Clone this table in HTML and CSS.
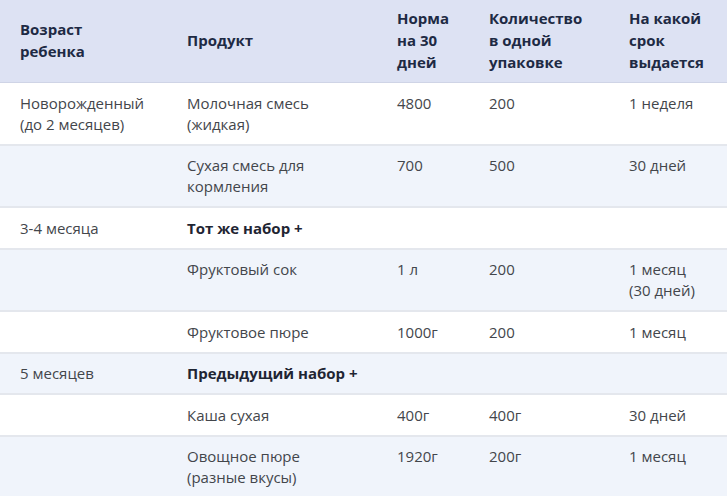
FILE: index.html
```html
<!DOCTYPE html>
<html lang="ru">
<head>
<meta charset="utf-8">
<link rel="stylesheet" href="styles.css">
</head>
<body>
<table class="norms">
  <colgroup>
    <col class="c1"><col class="c2"><col class="c3"><col class="c4"><col class="c5">
  </colgroup>
  <thead>
    <tr>
      <th>Возраст<br>ребенка</th>
      <th>Продукт</th>
      <th>Норма<br>на 30<br>дней</th>
      <th>Количество<br>в одной<br>упаковке</th>
      <th>На какой<br>срок<br>выдается</th>
    </tr>
  </thead>
  <tbody>
    <tr>
      <td>Новорожденный<br>(до 2 месяцев)</td>
      <td>Молочная смесь<br>(жидкая)</td>
      <td>4800</td>
      <td>200</td>
      <td>1 неделя</td>
    </tr>
    <tr class="alt">
      <td></td>
      <td>Сухая смесь для<br>кормления</td>
      <td>700</td>
      <td>500</td>
      <td>30 дней</td>
    </tr>
    <tr>
      <td>3-4 месяца</td>
      <td class="strong">Тот же набор +</td>
      <td></td>
      <td></td>
      <td></td>
    </tr>
    <tr class="alt">
      <td></td>
      <td>Фруктовый сок</td>
      <td>1 л</td>
      <td>200</td>
      <td>1 месяц<br>(30 дней)</td>
    </tr>
    <tr>
      <td></td>
      <td>Фруктовое пюре</td>
      <td>1000г</td>
      <td>200</td>
      <td>1 месяц</td>
    </tr>
    <tr class="alt">
      <td>5 месяцев</td>
      <td class="strong">Предыдущий набор +</td>
      <td></td>
      <td></td>
      <td></td>
    </tr>
    <tr>
      <td></td>
      <td>Каша сухая</td>
      <td>400г</td>
      <td>400г</td>
      <td>30 дней</td>
    </tr>
    <tr class="alt">
      <td></td>
      <td>Овощное пюре<br>(разные вкусы)</td>
      <td>1920г</td>
      <td>200г</td>
      <td>1 месяц</td>
    </tr>
  </tbody>
</table>
</body>
</html>
```

FILE: styles.css
```css
html, body {
  margin: 0;
  padding: 0;
  background: #ffffff;
}

.norms {
  width: 727px;
  border-collapse: collapse;
  table-layout: fixed;
  font-family: "Open Sans", "Noto Sans", sans-serif;
  font-size: 15px;
  line-height: 21px;
  color: #43464b;
}

.c1 { width: 167px; }
.c2 { width: 210px; }
.c3 { width: 92px; }
.c4 { width: 140px; }
.c5 { width: 118px; }

.norms th {
  background: #dde2f3;
  color: #1e2a44;
  font-weight: 700;
  line-height: 22px;
  text-align: left;
  vertical-align: middle;
  padding: 7px 10px 9px 20px;
  border-bottom: 1px solid #cfd4e6;
}

.norms td {
  text-align: left;
  vertical-align: top;
  padding: 9.5px 10px 9px 20px;
  border-bottom: 2px solid #e4e7ed;
}

.norms tr.alt td {
  background: #f0f4fb;
}

.norms td.strong {
  font-weight: 700;
  color: #1f2533;
}
```
